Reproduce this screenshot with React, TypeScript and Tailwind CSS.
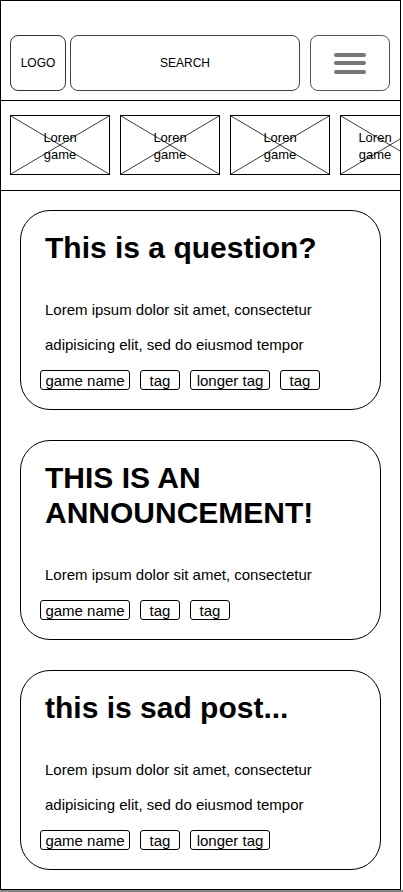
import React from "react";

interface Post {
  title: string[];
  body: string[];
  tags: { label: string; width: string }[];
}

const posts: Post[] = [
  {
    title: ["This is a question?"],
    body: ["Lorem ipsum dolor sit amet, consectetur", "adipisicing elit, sed do eiusmod tempor"],
    tags: [
      { label: "game name", width: "w-[90px]" },
      { label: "tag", width: "w-[40px]" },
      { label: "longer tag", width: "w-[80px]" },
      { label: "tag", width: "w-[40px]" },
    ],
  },
  {
    title: ["THIS IS AN", "ANNOUNCEMENT!"],
    body: ["Lorem ipsum dolor sit amet, consectetur"],
    tags: [
      { label: "game name", width: "w-[90px]" },
      { label: "tag", width: "w-[40px]" },
      { label: "tag", width: "w-[40px]" },
    ],
  },
  {
    title: ["this is sad post..."],
    body: ["Lorem ipsum dolor sit amet, consectetur", "adipisicing elit, sed do eiusmod tempor"],
    tags: [
      { label: "game name", width: "w-[90px]" },
      { label: "tag", width: "w-[40px]" },
      { label: "longer tag", width: "w-[80px]" },
    ],
  },
];

// placeholder image box with the usual X through it
function GameTile({ last = false }: { last?: boolean }) {
  return (
    <div className="relative w-[100px] h-[60px] shrink-0 border border-black">
      <svg className="absolute inset-0 w-full h-full" viewBox="0 0 100 60" preserveAspectRatio="none">
        <line x1="0" y1="0" x2="100" y2="60" stroke="#000" strokeWidth="0.8" />
        <line x1="100" y1="0" x2="0" y2="60" stroke="#000" strokeWidth="0.8" />
      </svg>
      <div
        className={`absolute inset-0 pt-[2px] flex flex-col items-center justify-center text-[13px] leading-[17px] text-black ${
          last ? "pr-[30px]" : ""
        }`}
      >
        <span>Loren</span>
        <span>game</span>
      </div>
    </div>
  );
}

function PostCard({ post }: { post: Post }) {
  return (
    <div className="h-[200px] shrink-0 border border-black rounded-[30px] pt-[19px] pl-[24px] pr-[20px] flex flex-col">
      <h2 className="text-[30px] font-bold leading-[35px]">
        {post.title.map((line, i) => (
          <span key={i} className="block">
            {line}
          </span>
        ))}
      </h2>
      <p className="mt-[27px] text-[15px] leading-[35px]">
        {post.body.map((line, i) => (
          <span key={i} className="block whitespace-nowrap">
            {line}
          </span>
        ))}
      </p>
      <div className="mt-[8px] -ml-[5px] flex gap-[10px]">
        {post.tags.map((tag, i) => (
          <span
            key={i}
            className={`${tag.width} h-[20px] border border-black rounded-[3px] text-[15px] leading-[18px] pt-[1px] text-center whitespace-nowrap`}
          >
            {tag.label}
          </span>
        ))}
      </div>
    </div>
  );
}

export default function App() {
  return (
    <div className="w-[403px] h-[892px] bg-white text-black font-['Liberation_Sans',Arial,sans-serif] flex flex-col">
      <div className="w-[401px] h-[890px] border border-black flex flex-col overflow-hidden">
        {/* Top bar */}
        <div className="h-[100px] shrink-0 border-b border-black pt-[34px] pl-[9px] flex items-start">
          <div className="w-[56px] h-[56px] border border-[#333] rounded-[8px] flex items-center justify-center text-[12px]">
            LOGO
          </div>
          <div className="ml-[4px] w-[230px] h-[56px] border-[1.5px] border-[#444] rounded-[8px] flex items-center justify-center text-[12px]">
            SEARCH
          </div>
          <div className="ml-[10px] w-[80px] h-[56px] border-[1.5px] border-[#555] rounded-[8px] flex flex-col items-center justify-center gap-[4.5px]">
            <div className="w-[32px] h-[4px] rounded-full bg-[#777]" />
            <div className="w-[32px] h-[4px] rounded-full bg-[#777]" />
            <div className="w-[32px] h-[4px] rounded-full bg-[#777]" />
          </div>
        </div>

        {/* Games strip */}
        <div className="h-[90px] shrink-0 border-b border-black pt-[14px] pl-[9px] flex gap-[10px] overflow-hidden">
          <GameTile />
          <GameTile />
          <GameTile />
          <GameTile last />
        </div>

        {/* Feed */}
        <div className="flex-1 pt-[19px] px-[19px] flex flex-col gap-[30px]">
          {posts.map((post, i) => (
            <PostCard key={i} post={post} />
          ))}
        </div>
      </div>
      <div className="h-[2px] bg-[#888]" />
    </div>
  );
}
